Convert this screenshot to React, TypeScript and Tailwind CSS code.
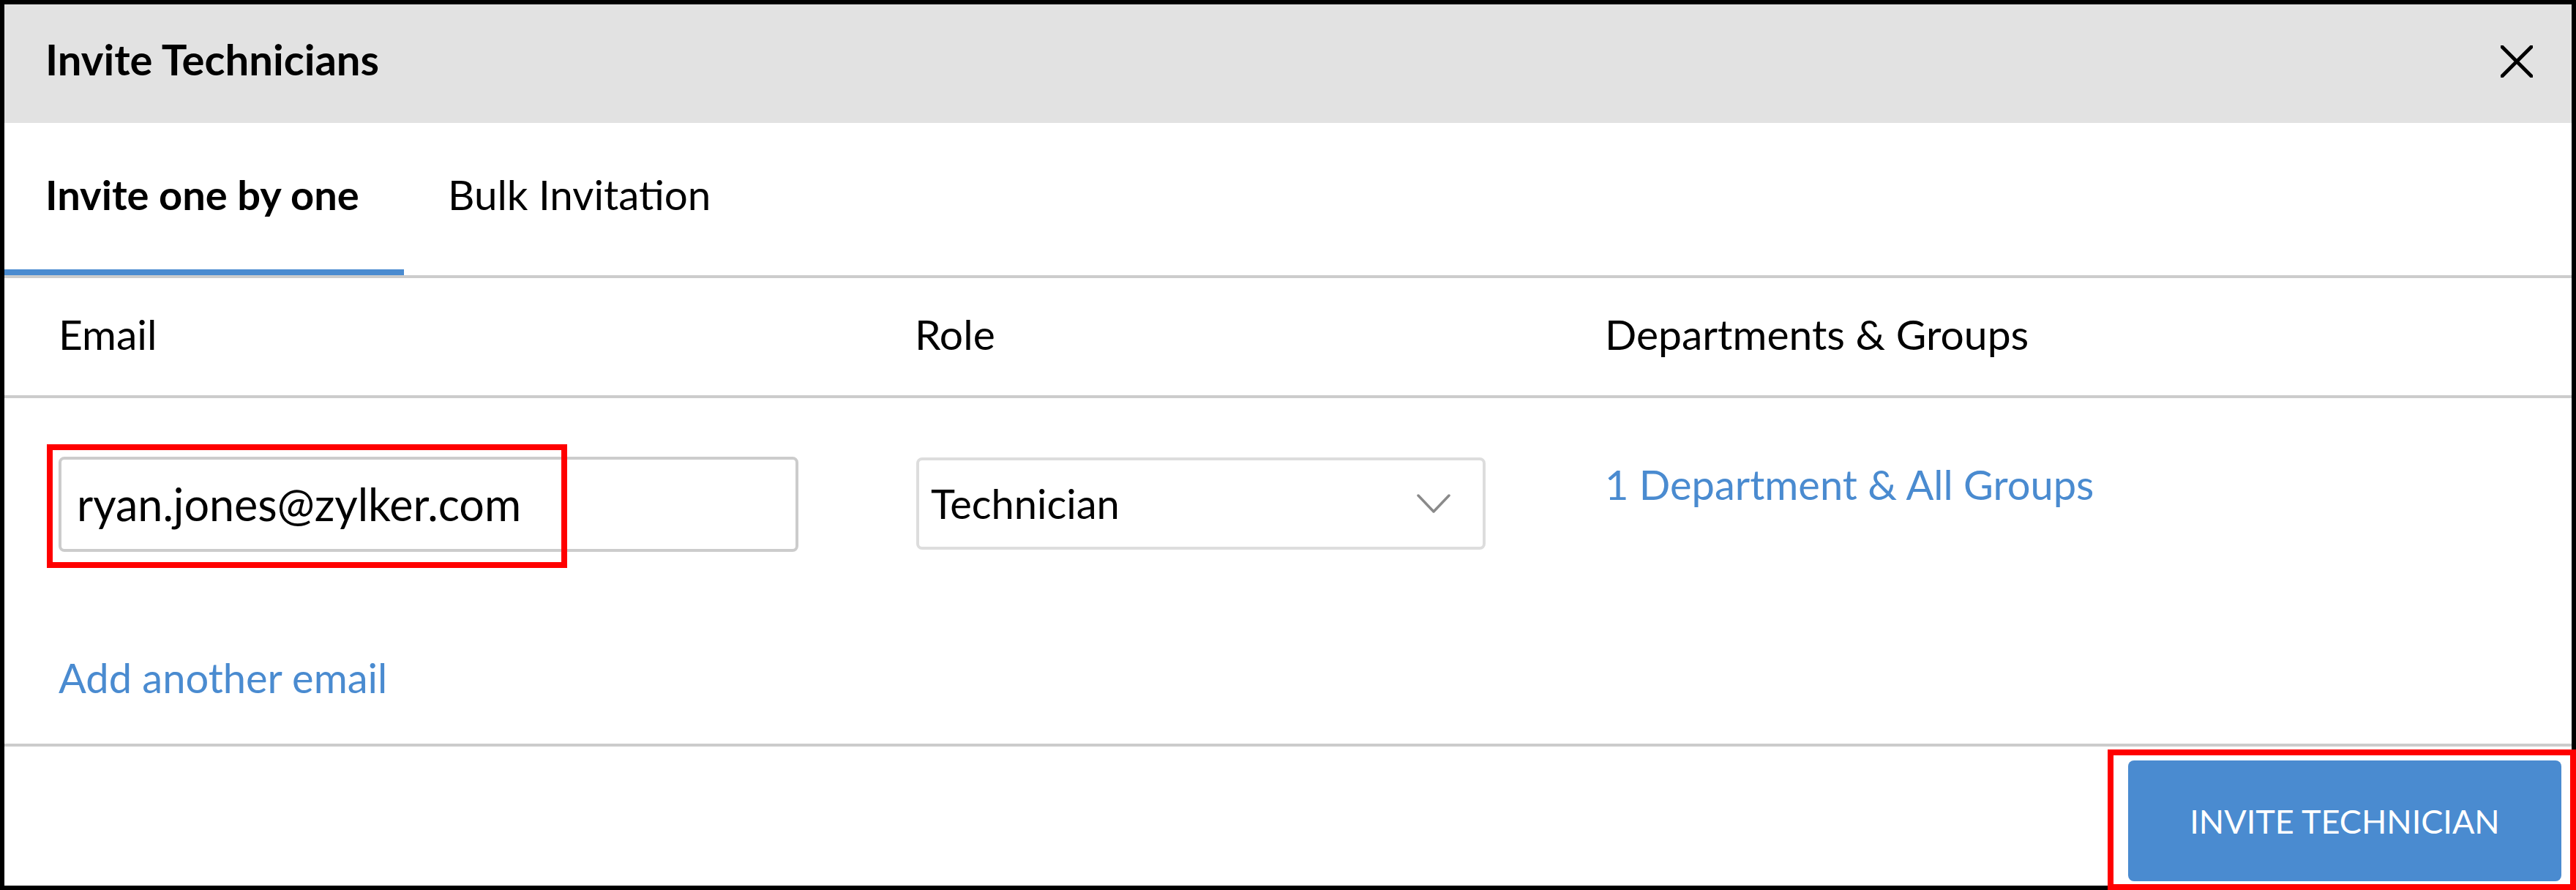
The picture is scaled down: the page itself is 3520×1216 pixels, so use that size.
import React from "react";

export default function App() {
  return (
    <div className="relative box-border flex h-[1216px] w-[3520px] flex-col border-[6px] border-black bg-white font-['Lato',sans-serif] text-black">
      {/* Header */}
      <div className="flex h-[162px] shrink-0 items-start justify-between bg-[#e2e2e2] pl-[56px] pr-[53px] pt-[40px]">
        <div className="text-[58px] font-bold leading-[1.2]">Invite Technicians</div>
        <svg className="mt-[16px] h-[44px] w-[44px]" viewBox="0 0 44 44" fill="none">
          <path d="M2 2 L42 42 M42 2 L2 42" stroke="#000" strokeWidth="5" strokeLinecap="round" />
        </svg>
      </div>

      {/* Tabs */}
      <div className="box-border flex h-[212px] shrink-0 border-b-[4px] border-[#cccccc]">
        <div className="box-border h-[208px] w-[546px] border-b-[8px] border-[#4a8bd0] pl-[56px] pt-[64px] text-[56px] font-bold leading-[1.2]">
          Invite one by one
        </div>
        <div className="box-border h-[208px] pl-[60px] pt-[64px] text-[56.5px] leading-[1.2]">Bulk Invitation</div>
      </div>

      {/* Column headers */}
      <div className="box-border grid h-[164px] shrink-0 grid-cols-[1174px_939px_1fr] border-b-[4px] border-[#cccccc] pl-[74px] pt-[42px] text-[57px] leading-[1.2]">
        <div>Email</div>
        <div className="-ml-[4px]">Role</div>
        <div>Departments &amp; Groups</div>
      </div>

      {/* Content */}
      <div className="box-border h-[476px] shrink-0 border-b-[4px] border-[#cccccc] pl-[74px] pt-[80px]">
        <div className="grid grid-cols-[1174px_939px_1fr] items-start">
          <div className="box-border flex h-[130px] w-[1011px] items-center rounded-[8px] border-[4px] border-[#cccccc] pl-[21px] text-[61px] leading-[1.2]">
            ryan.jones@zylker.com
          </div>
          <div className="-ml-[2px] mt-[1px] box-border flex h-[126px] w-[778px] items-center justify-between rounded-[8px] border-[4px] border-[#dddddd] pl-[16px] pr-[44px] text-[56px] leading-[1.2]">
            <span>Technician</span>
            <svg className="h-[26px] w-[46px]" viewBox="0 0 46 26" fill="none">
              <path d="M2 2 L23 24 L44 2" stroke="#8a8a8a" strokeWidth="3.5" strokeLinecap="round" strokeLinejoin="round" />
            </svg>
          </div>
          <div className="pt-[4px] text-[56px] leading-[1.2] text-[#4a8bd0]">1 Department &amp; All Groups</div>
        </div>
        <div className="mt-[138px] text-[56px] leading-[1.2] text-[#4a8bd0]">Add another email</div>
      </div>

      {/* Footer */}
      <div className="flex flex-1 items-start justify-end pr-[14px] pt-[19px]">
        <div className="flex h-[165px] w-[592px] items-center justify-center rounded-[8px] bg-[#4a8bd0] text-[45px] leading-[1.2] text-white">
          INVITE TECHNICIAN
        </div>
      </div>

      {/* Annotation boxes */}
      <div className="pointer-events-none absolute left-[58px] top-[601px] box-border h-[169px] w-[711px] border-[8px] border-[#ff0000]" />
      <div className="pointer-events-none absolute left-[2874px] top-[1018px] box-border h-[192px] w-[640px] border-[8px] border-[#ff0000]" />
    </div>
  );
}
